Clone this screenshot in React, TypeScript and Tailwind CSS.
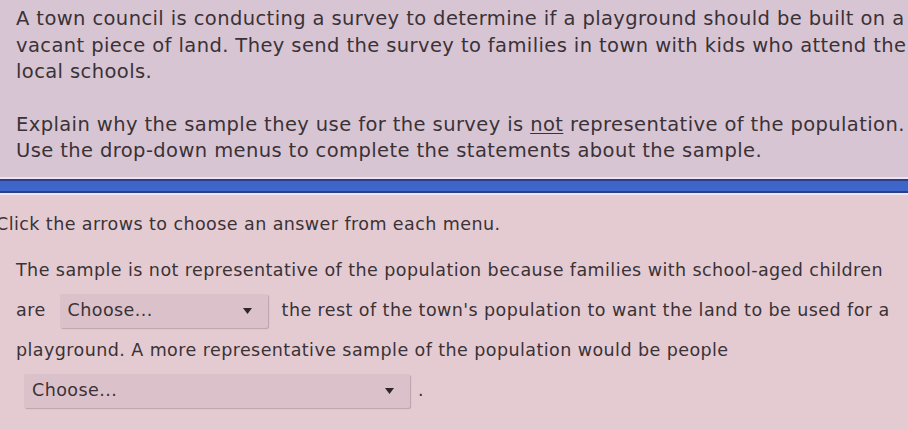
import { ReactNode } from "react";

function Dropdown({ className }: { className: string }) {
  return (
    <span
      className={`inline-flex h-[34px] items-center justify-between rounded-[2px] bg-[#dbc2ca] pl-2 pr-4 align-middle leading-none shadow-[1px_1px_1px_rgba(120,90,100,0.35)] ${className}`}
    >
      <span>Choose...</span>
      <svg width="9" height="6" viewBox="0 0 9 6" className="fill-[#2e2629]">
        <path d="M0 0h9L4.5 6z" />
      </svg>
    </span>
  );
}

function Para({ children, className = "" }: { children: ReactNode; className?: string }) {
  return <p className={`whitespace-nowrap ${className}`}>{children}</p>;
}

export default function App() {
  return (
    <div
      className="h-[430px] w-[908px] overflow-hidden text-[#3a3236]"
      style={{ fontFamily: '"DejaVu Sans", sans-serif' }}
    >
      <section className="h-[177px] bg-[#d8c5d4] px-4 pt-[6px] text-[19.5px] leading-[26.5px] tracking-[0.4px]">
        <Para>
          A town council is conducting a survey to determine if a playground should be built on a
          <br />
          vacant piece of land. They send the survey to families in town with kids who attend the
          <br />
          local schools.
        </Para>
        <Para className="mt-[26px]">
          Explain why the sample they use for the survey is <span className="underline underline-offset-2">not</span>{" "}
          representative of the population.
          <br />
          Use the drop-down menus to complete the statements about the sample.
        </Para>
      </section>

      {/* divider bar between the prompt and the answer area */}
      <div className="h-[2px] bg-[#ece4f4]" />
      <div className="h-[2px] bg-[#2b3f86]" />
      <div className="h-[10px] bg-[#3f65c8]" />
      <div className="h-[2px] bg-[#2b3f86]" />
      <div className="h-[2px] bg-[#ece4f4]" />

      <section className="h-full bg-[#e4cbd2] text-[17.5px] tracking-[0.43px]">
        <p className="-ml-[4px] pt-[17px] leading-[24px]">Click the arrows to choose an answer from each menu.</p>
        <div className="mt-[14px] whitespace-nowrap px-4 leading-[40px]">
          The sample is not representative of the population because families with school-aged children
          <br />
          are
          <Dropdown className="mx-[14px] w-[208px]" />
          the rest of the town's population to want the land to be used for a
          <br />
          playground. A more representative sample of the population would be people
          <br />
          <Dropdown className="mx-2 w-[386px]" />.
        </div>
      </section>
    </div>
  );
}
